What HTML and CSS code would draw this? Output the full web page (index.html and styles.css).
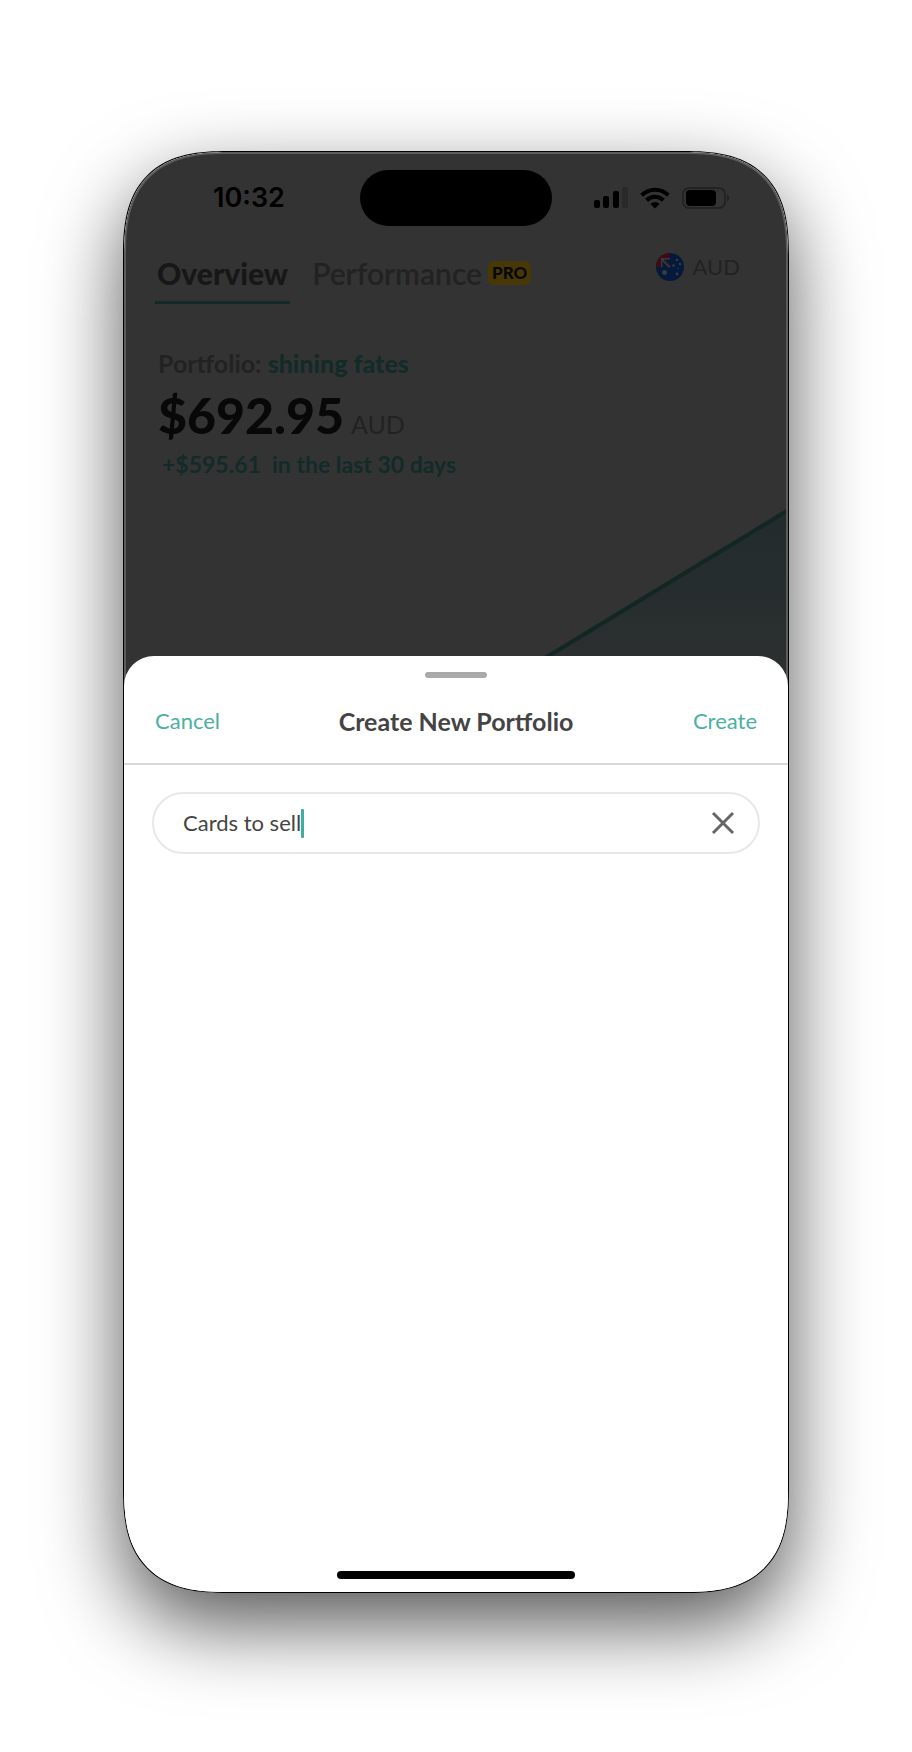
FILE: index.html
```html
<!DOCTYPE html>
<html lang="en">
  <head>
    <meta charset="UTF-8" />
    <meta name="viewport" content="width=device-width, initial-scale=1.0" />
    <title>Create New Portfolio</title>
    <link rel="stylesheet" href="styles.css">
  </head>
  <body>
    <main class="stage">
      <div class="phone">
        <section class="dashboard">
          <div class="status-bar">
            <span class="status-bar__time">10:32</span>
            <span class="status-bar__island"></span>
            <span class="status-bar__icons">
              <svg width="34" height="22" viewBox="0 0 34 22" aria-hidden="true">
                <rect x="0" y="13" width="6" height="8" rx="2" />
                <rect x="9" y="9" width="6" height="12" rx="2" />
                <rect x="19" y="4" width="6" height="17" rx="2" />
                <rect x="28" y="0" width="6" height="21" rx="2" fill="#292929" />
              </svg>
              <svg width="30" height="22" viewBox="0 0 30 22" aria-hidden="true">
                <g fill="none" stroke="#000" stroke-width="4">
                  <path d="M1.7 8.2a19 19 0 0 1 26.6 0" />
                  <path d="M6.6 13.2a12 12 0 0 1 16.8 0" />
                </g>
                <path d="M15 21.5l-4.6-4.6a6.5 6.5 0 0 1 9.2 0z" />
              </svg>
              <svg width="48" height="22" viewBox="0 0 48 22" aria-hidden="true">
                <rect x="1" y="1" width="42" height="20" rx="6" fill="none" stroke="#232323" stroke-width="2" />
                <rect x="4" y="3" width="30" height="16" rx="4" />
                <path d="M45 7.500c3 1 3 6 0 7z" fill="#232323" />
              </svg>
            </span>
          </div>

          <nav class="tabs">
            <a class="tabs__item tabs__item--active" href="#overview">Overview</a>
            <a class="tabs__item" href="#performance">Performance <span class="tabs__pro">PRO</span></a>
            <button class="currency" type="button">
              <svg width="28" height="28" viewBox="0 0 28 28" aria-hidden="true">
                <clipPath id="flag"><circle cx="14" cy="14" r="14" /></clipPath>
                <g clip-path="url(#flag)">
                  <path fill="#04193c" d="M0 0h28v28H0z" />
                  <path fill="#400a14" d="M0 0h14v5H5v9H0z" />
                  <path fill="none" stroke="#383838" stroke-width="1.500" d="M14 5.700H5.700V14" />
                  <path stroke="#383838" stroke-width="2.600" d="M6 6l8 8" />
                  <path stroke="#400a14" stroke-width="1" d="M8 7l6 6" />
                </g>
                <g fill="#3a3a3a">
                  <circle cx="8.500" cy="19.500" r="2.500" />
                  <circle cx="21" cy="7" r="1.300" />
                  <circle cx="17.500" cy="12.500" r="1.300" />
                  <circle cx="24" cy="11" r="1.300" />
                  <circle cx="22" cy="15.500" r="0.800" />
                  <circle cx="21" cy="21" r="1.400" />
                </g>
              </svg>
              AUD
            </button>
          </nav>

          <div class="summary">
            <p class="summary__name">Portfolio: <span class="summary__link">shining fates</span></p>
            <p class="summary__value">$692.95 <span class="summary__unit">AUD</span></p>
            <p class="summary__change">+$595.61&nbsp; in the last 30 days</p>
          </div>

          <svg class="chart" viewBox="0 0 660 183" preserveAspectRatio="xMaxYMin slice" aria-hidden="true">
            <linearGradient id="fade" x1="0" y1="0" x2="0" y2="1">
              <stop offset="0" stop-color="#222b2d" />
              <stop offset="1" stop-color="#2d302f" />
            </linearGradient>
            <path fill="url(#fade)" d="M660 7L370 183h290z" />
            <path fill="none" stroke="#122724" stroke-width="4" d="M664 4L370 183" />
          </svg>
        </section>

        <form class="sheet">
          <span class="sheet__grabber"></span>
          <header class="sheet__header">
            <button class="sheet__action" type="button">Cancel</button>
            <h1 class="sheet__title">Create New Portfolio</h1>
            <button class="sheet__action sheet__action--end" type="submit">Create</button>
          </header>

          <div class="field">
            <span class="field__value">
              <input class="field__input" type="text" value="Cards to sell" aria-label="Portfolio name" />
              <span class="field__caret"></span>
            </span>
            <button class="field__clear" type="button" aria-label="Clear">
              <svg width="24" height="24" viewBox="0 0 24 24" aria-hidden="true">
                <path fill="none" stroke="#666" stroke-width="3" d="M2 2l20 20M22 2L2 22" />
              </svg>
            </button>
          </div>

          <span class="sheet__home"></span>
        </form>
      </div>
    </main>
  </body>
</html>
```
FILE: styles.css
```css
* {
  box-sizing: border-box;
}

body {
  margin: 0;
  font-family: Lato, sans-serif;
  color: #444;
  background: #fff;
}

button,
input {
  font: inherit;
  color: inherit;
  padding: 0;
  border: 0;
  background: none;
}

button {
  cursor: pointer;
}

p,
h1 {
  margin: 0;
}

a {
  color: inherit;
  text-decoration: none;
}

svg {
  display: block;
}

.stage {
  display: flex;
  justify-content: center;
  min-height: 100vh;
  padding: 151px 24px 159px;
}

.phone {
  display: flex;
  flex-direction: column;
  flex: 1;
  max-width: 666px;
  border: 1px solid #000;
  border-radius: 84px;
  overflow: hidden;
  background: #fff;
  box-shadow: 0 32px 80px rgba(0, 0, 0, 0.66);
}

/* the page behind the sheet, already dimmed */
.dashboard {
  display: flex;
  flex-direction: column;
  border: 2px solid #5c5c5c;
  border-bottom: 0;
  border-radius: 83px 83px 0 0;
  color: #222;
  background: #333;
}

@supports (corner-shape: superellipse(1.4)) {
  .phone {
    border-radius: 105px;
    corner-shape: superellipse(1.4);
  }

  .dashboard {
    border-radius: 104px 104px 0 0;
    corner-shape: superellipse(1.4);
  }
}

.status-bar {
  display: grid;
  grid-template-columns: 1fr 192px 1fr;
  align-items: center;
  margin-top: 16px;
}

.status-bar__time {
  padding-left: 12px;
  text-align: center;
  font-family: Inter, sans-serif;
  font-size: 27px;
  font-weight: 600;
  line-height: 32px;
  color: #000;
}

.status-bar__island {
  height: 56px;
  border-radius: 28px;
  background: #000;
}

.status-bar__icons {
  display: flex;
  justify-content: center;
  gap: 12px;
  padding-right: 14px;
}

.tabs {
  display: flex;
  align-items: flex-start;
  gap: 20px;
  padding: 23px 46px 0 29px;
}

.tabs__item {
  display: flex;
  align-items: center;
  gap: 6px;
  padding: 4px 2px 8px;
  font-size: 30px;
  font-weight: 600;
  line-height: 40px;
  border-bottom: 3px solid transparent;
}

.tabs__item--active {
  font-weight: 900;
  color: #171717;
  border-color: #122b28;
}

.tabs__pro {
  padding: 0 4px;
  font-size: 17px;
  font-weight: 900;
  line-height: 24px;
  color: #080808;
  background: #483806;
  border-radius: 6px;
}

.currency {
  display: flex;
  align-items: center;
  gap: 9px;
  margin-left: auto;
  padding-top: 4px;
  font-size: 22px;
  line-height: 28px;
}

.summary {
  padding: 43px 32px 0;
}

.summary__name {
  font-size: 25px;
  font-weight: 700;
  line-height: 32px;
}

.summary__link {
  color: #122b28;
  font-weight: 900;
}

.summary__value {
  display: flex;
  align-items: baseline;
  gap: 7px;
  margin: 6px 0 2px;
  font-size: 50px;
  font-weight: 900;
  line-height: 60px;
  color: #080808;
}

.summary__unit {
  font-size: 25px;
  font-weight: 400;
  line-height: 30px;
  color: #222;
}

.summary__change {
  padding-left: 4px;
  font-size: 23px;
  font-weight: 700;
  line-height: 34px;
  color: #122b28;
}

.chart {
  width: 100%;
  height: 183px;
  margin-top: 24px;
}

.sheet {
  display: flex;
  flex-direction: column;
  flex: 1;
  margin-top: -32px;
  border-radius: 30px 30px 0 0;
  background: #fff;
}

.sheet__grabber {
  width: 62px;
  height: 6px;
  margin: 16px auto 0;
  border-radius: 3px;
  background: #aaa;
}

.sheet__header {
  display: grid;
  grid-template-columns: 1fr auto 1fr;
  align-items: center;
  padding: 27px 31px 26px;
  border-bottom: 2px solid #d8d8d8;
}

.sheet__title {
  font-size: 25px;
  font-weight: 700;
  line-height: 32px;
}

.sheet__action {
  justify-self: start;
  font-size: 22px;
  line-height: 32px;
  color: #4cb0a4;
}

.sheet__action--end {
  justify-self: end;
}

.field {
  display: flex;
  align-items: center;
  justify-content: space-between;
  height: 62px;
  margin: 27px 28px 0;
  padding: 0 23px 0 29px;
  border: 2px solid #e8e8e8;
  border-radius: 31px;
}

.field__value {
  display: flex;
  align-items: center;
}

.field__input {
  field-sizing: content;
  font-size: 22px;
  line-height: 32px;
  outline: 0;
}

.field__caret {
  width: 3px;
  height: 29px;
  border-radius: 1px;
  background: #40ada0;
}

.sheet__home {
  width: 238px;
  height: 8px;
  margin: auto auto 13px;
  border-radius: 4px;
  background: #000;
}
```
